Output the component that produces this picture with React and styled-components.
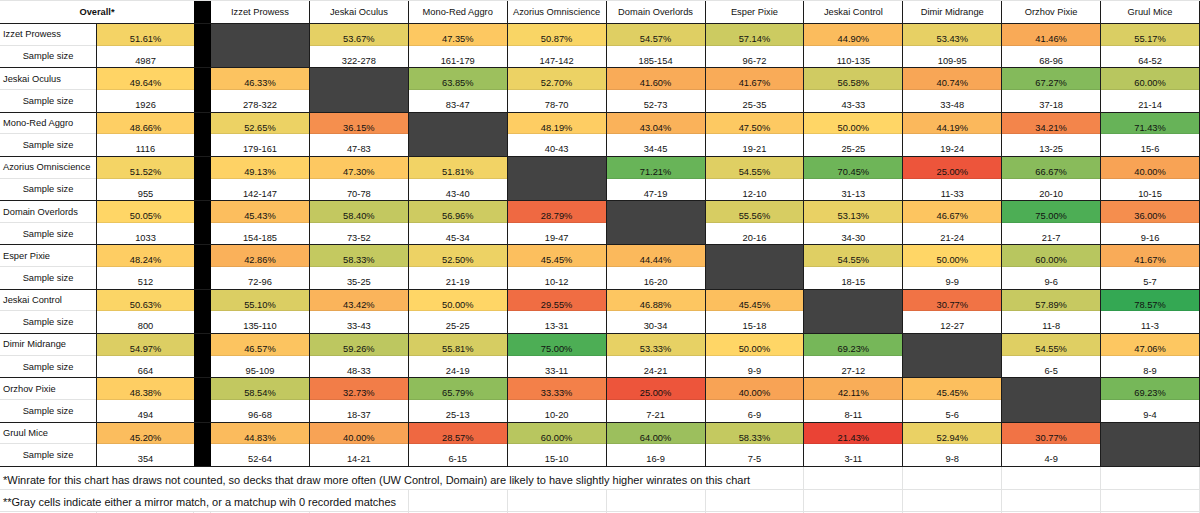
import React from "react";
import styled, { createGlobalStyle } from "styled-components";

const GlobalStyle = createGlobalStyle`
  html, body { margin: 0; padding: 0; background: #ffffff; }
  body { font-family: "Liberation Sans", Arial, sans-serif; color: #111; }
`;

const DECKS = [
  "Izzet Prowess",
  "Jeskai Oculus",
  "Mono-Red Aggro",
  "Azorius Omniscience",
  "Domain Overlords",
  "Esper Pixie",
  "Jeskai Control",
  "Dimir Midrange",
  "Orzhov Pixie",
  "Gruul Mice",
];

// [pct, record] or null for gray (mirror) cells
const ROWS = [
  { overall: 51.61, sample: 4987, cells: [null, [53.67, "322-278"], [47.35, "161-179"], [50.87, "147-142"], [54.57, "185-154"], [57.14, "96-72"], [44.9, "110-135"], [53.43, "109-95"], [41.46, "68-96"], [55.17, "64-52"]] },
  { overall: 49.64, sample: 1926, cells: [[46.33, "278-322"], null, [63.85, "83-47"], [52.7, "78-70"], [41.6, "52-73"], [41.67, "25-35"], [56.58, "43-33"], [40.74, "33-48"], [67.27, "37-18"], [60.0, "21-14"]] },
  { overall: 48.66, sample: 1116, cells: [[52.65, "179-161"], [36.15, "47-83"], null, [48.19, "40-43"], [43.04, "34-45"], [47.5, "19-21"], [50.0, "25-25"], [44.19, "19-24"], [34.21, "13-25"], [71.43, "15-6"]] },
  { overall: 51.52, sample: 955, cells: [[49.13, "142-147"], [47.3, "70-78"], [51.81, "43-40"], null, [71.21, "47-19"], [54.55, "12-10"], [70.45, "31-13"], [25.0, "11-33"], [66.67, "20-10"], [40.0, "10-15"]] },
  { overall: 50.05, sample: 1033, cells: [[45.43, "154-185"], [58.4, "73-52"], [56.96, "45-34"], [28.79, "19-47"], null, [55.56, "20-16"], [53.13, "34-30"], [46.67, "21-24"], [75.0, "21-7"], [36.0, "9-16"]] },
  { overall: 48.24, sample: 512, cells: [[42.86, "72-96"], [58.33, "35-25"], [52.5, "21-19"], [45.45, "10-12"], [44.44, "16-20"], null, [54.55, "18-15"], [50.0, "9-9"], [60.0, "9-6"], [41.67, "5-7"]] },
  { overall: 50.63, sample: 800, cells: [[55.1, "135-110"], [43.42, "33-43"], [50.0, "25-25"], [29.55, "13-31"], [46.88, "30-34"], [45.45, "15-18"], null, [30.77, "12-27"], [57.89, "11-8"], [78.57, "11-3"]] },
  { overall: 54.97, sample: 664, cells: [[46.57, "95-109"], [59.26, "48-33"], [55.81, "24-19"], [75.0, "33-11"], [53.33, "24-21"], [50.0, "9-9"], [69.23, "27-12"], null, [54.55, "6-5"], [47.06, "8-9"]] },
  { overall: 48.38, sample: 494, cells: [[58.54, "96-68"], [32.73, "18-37"], [65.79, "25-13"], [33.33, "10-20"], [25.0, "7-21"], [40.0, "6-9"], [42.11, "8-11"], [45.45, "5-6"], null, [69.23, "9-4"]] },
  { overall: 45.2, sample: 354, cells: [[44.83, "52-64"], [40.0, "14-21"], [28.57, "6-15"], [60.0, "15-10"], [64.0, "16-9"], [58.33, "7-5"], [21.43, "3-11"], [52.94, "9-8"], [30.77, "4-9"], null] },
];

const RED = [234, 67, 53];
const YELLOW = [255, 214, 102];
const GREEN = [52, 168, 83];
const MIN = 21.43;
const MID = 50;
const MAX = 78.57;

function mix(a, b, t) {
  const c = a.map((v, i) => Math.round(v + (b[i] - v) * t));
  return `rgb(${c[0]}, ${c[1]}, ${c[2]})`;
}

function scaleColor(v) {
  if (v <= MID) {
    const t = Math.max(0, Math.min(1, (v - MIN) / (MID - MIN)));
    return mix(RED, YELLOW, t);
  }
  const t = Math.max(0, Math.min(1, (v - MID) / (MAX - MID)));
  return mix(YELLOW, GREEN, t);
}

const fmt = (v) => `${v.toFixed(2)}%`;

const COLS = "97px 97px 17px repeat(10, 1fr)";
const LINE = "#1c1c1c";
const GRID = "#e2e3e3";

const Sheet = styled.div`
  width: 1200px;
  height: 513px;
  overflow: hidden;
  background: #fff;
  border-top: 1px solid ${GRID};
  box-sizing: border-box;
  font-size: 9.3px;
`;

const Row = styled.div`
  display: grid;
  grid-template-columns: ${COLS};
  box-sizing: border-box;
`;

const HeaderRow = styled(Row)`
  height: 23px;
  border-bottom: 1px solid ${LINE};
`;

const OverallHead = styled.div`
  grid-column: span 2;
  display: flex;
  align-items: center;
  justify-content: center;
  font-weight: bold;
`;

const DeckHead = styled.div`
  display: flex;
  align-items: center;
  justify-content: center;
  border-right: 1px solid ${LINE};
  white-space: nowrap;
`;

const Divider = styled.div`
  background: #000;
`;

const Group = styled(Row)`
  height: 44.3px;
  border-bottom: 1px solid ${LINE};
`;

const NameCell = styled.div`
  display: grid;
  grid-template-rows: 1fr 1fr;
  border-right: 1px solid ${LINE};
  min-height: 0;
`;

const DeckName = styled.div`
  display: flex;
  align-items: center;
  padding-left: 3px;
  border-bottom: 1px solid ${GRID};
  white-space: nowrap;
`;

const SampleLabel = styled.div`
  display: flex;
  align-items: center;
  justify-content: center;
  white-space: nowrap;
`;

const ValueCell = styled.div`
  display: grid;
  grid-template-rows: 1fr 1fr;
  border-right: 1px solid ${LINE};
  min-height: 0;
`;

const OverallCell = styled(ValueCell)`
  border-right: none;
`;

const Pct = styled.div`
  display: flex;
  align-items: flex-end;
  justify-content: center;
  padding-bottom: 1px;
  background: ${(p) => p.$bg};
  box-shadow: inset 0 -1px 0 rgba(0, 0, 0, 0.08);
  line-height: 1.15;
`;

const Count = styled.div`
  display: flex;
  align-items: flex-end;
  justify-content: center;
  padding-bottom: 1px;
  line-height: 1.15;
`;

const Mirror = styled.div`
  background: #434343;
  border-right: 1px solid ${LINE};
`;

const NoteRow = styled(Row)`
  height: ${(p) => p.$h}px;
`;

const NoteText = styled.div`
  grid-column: 1 / span ${(p) => p.$span};
  display: flex;
  align-items: flex-end;
  padding: 0 0 3px 3px;
  font-size: 11px;
  white-space: nowrap;
  border-bottom: 1px solid ${GRID};
  border-right: 1px solid ${GRID};
  color: #111;
`;

const Blank = styled.div`
  border-bottom: 1px solid ${GRID};
  border-right: 1px solid ${GRID};
`;

function NotesLine({ text, span, height }) {
  const blanks = 13 - span;
  return (
    <NoteRow $h={height}>
      {text !== null ? <NoteText $span={span}>{text}</NoteText> : null}
      {Array.from({ length: text !== null ? blanks : 13 }).map((_, i) => (
        <Blank key={i} />
      ))}
    </NoteRow>
  );
}

export default function App() {
  return (
    <>
      <GlobalStyle />
      <Sheet>
        <HeaderRow>
          <OverallHead>Overall*</OverallHead>
          <Divider />
          {DECKS.map((d) => (
            <DeckHead key={d}>{d}</DeckHead>
          ))}
        </HeaderRow>
        {ROWS.map((r, i) => (
          <Group key={DECKS[i]}>
            <NameCell>
              <DeckName>{DECKS[i]}</DeckName>
              <SampleLabel>Sample size</SampleLabel>
            </NameCell>
            <OverallCell>
              <Pct $bg={scaleColor(r.overall)}>{fmt(r.overall)}</Pct>
              <Count>{r.sample}</Count>
            </OverallCell>
            <Divider />
            {r.cells.map((c, j) =>
              c ? (
                <ValueCell key={j}>
                  <Pct $bg={scaleColor(c[0])}>{fmt(c[0])}</Pct>
                  <Count>{c[1]}</Count>
                </ValueCell>
              ) : (
                <Mirror key={j} />
              )
            )}
          </Group>
        ))}
        <NotesLine
          height={23}
          span={9}
          text="*Winrate for this chart has draws not counted, so decks that draw more often (UW Control, Domain) are likely to have slightly higher winrates on this chart"
        />
        <NotesLine
          height={22}
          span={5}
          text="**Gray cells indicate either a mirror match, or a matchup wih 0 recorded matches"
        />
        <NotesLine height={22} span={13} text={null} />
      </Sheet>
    </>
  );
}
